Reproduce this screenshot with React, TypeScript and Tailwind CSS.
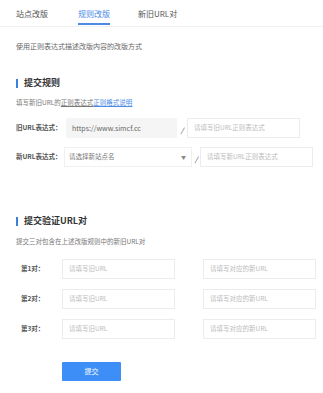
import React from "react";

const font = { fontFamily: '"Noto Sans CJK SC", "Noto Sans", sans-serif' };

function Heading({ children }: { children: React.ReactNode }) {
  return (
    <div className="flex items-center h-[10px] ml-[16px]">
      <div className="w-[2px] h-[9px] bg-[#3b7fe0]" />
      <div className="ml-[6px] text-[9px] leading-[10px] font-bold text-[#333]">{children}</div>
    </div>
  );
}

function Input({ w, placeholder }: { w: string; placeholder: string }) {
  return (
    <div className={`${w} h-[20px] border border-[#ececec] bg-white flex items-center pl-[6px] text-[6.5px] text-[#bbb] whitespace-nowrap`}>
      {placeholder}
    </div>
  );
}

export default function App() {
  return (
    <div className="w-[323px] h-[393px] bg-white overflow-hidden text-[#555]" style={font}>
      {/* Tabs */}
      <div className="flex h-[27px] border-b border-[#f0f0f0] pl-[16px]">
        <div className="pt-[9px] text-[8px] leading-[9px] text-[#555] w-[32px]">站点改版</div>
        <div className="ml-[30px] flex flex-col pt-[9px]">
          <div className="text-[8px] leading-[9px] text-[#4a8ae6]">规则改版</div>
          <div className="mt-[5px] h-[2px] bg-[#4a8ae6]" />
        </div>
        <div className="ml-[28px] pt-[9px] text-[8px] leading-[9px] text-[#555]">新旧URL对</div>
      </div>

      <div className="ml-[16px] mt-[15px] text-[7px] leading-[9px] text-[#666]">使用正则表达式描述改版内容的改版方式</div>

      <div className="mt-[27px]">
        <Heading>提交规则</Heading>
      </div>

      <div className="ml-[16px] mt-[10px] text-[6.5px] leading-[9px] text-[#777]">
        填写新旧URL的<span className="underline">正则表达式</span>
        <span className="text-[#4a8ae6] underline">正则格式说明</span>
      </div>

      {/* Old URL */}
      <div className="flex items-center mt-[11px] h-[20px]">
        <div className="ml-[16px] w-[50px] text-[6.5px] font-bold text-[#555] whitespace-nowrap">旧URL表达式：</div>
        <div className="w-[111px] h-[20px] bg-[#f5f5f5] flex items-center pl-[6px] text-[7px] text-[#666]">https://www.simcf.cc</div>
        <div className="w-[10px] text-center text-[7px] text-[#333] pt-[5px] italic">/</div>
        <Input w="w-[113px]" placeholder="请填写旧URL正则表达式" />
      </div>

      {/* New URL */}
      <div className="flex items-center mt-[9px] h-[20px]">
        <div className="ml-[16px] w-[48px] text-[6.5px] font-bold text-[#555] whitespace-nowrap">新URL表达式：</div>
        <div className="w-[128px] h-[20px] border border-[#f0f0f0] flex items-center pl-[4px] pr-[5px] text-[6.5px] text-[#777]">
          <span className="flex-1">请选择新站点名</span>
          <span className="text-[5px] text-[#888]">▼</span>
        </div>
        <div className="w-[8px] text-center text-[7px] text-[#333] pt-[5px] italic">/</div>
        <Input w="w-[113px]" placeholder="请填写新URL正则表达式" />
      </div>

      <div className="mt-[49px]">
        <Heading>提交验证URL对</Heading>
      </div>

      <div className="ml-[16px] mt-[11px] text-[6.5px] leading-[9px] text-[#777]">提交三对包含在上述改版规则中的新旧URL对</div>

      <div className="flex flex-col gap-[10px] mt-[13px]">
        {[1, 2, 3].map((n) => (
          <div key={n} className="flex items-center h-[20px]">
            <div className="ml-[21px] w-[41px] text-[6.5px] font-bold text-[#555] whitespace-nowrap">第{n}对：</div>
            <Input w="w-[113px]" placeholder="请填写旧URL" />
            <div className="w-[28px]" />
            <Input w="w-[113px]" placeholder="请填写对应的新URL" />
          </div>
        ))}
      </div>

      <div className="ml-[62px] mt-[23px] w-[59px] h-[19px] bg-[#3e8ef7] rounded-[1px] flex items-center justify-center text-[7px] text-white">
        提交
      </div>
    </div>
  );
}
